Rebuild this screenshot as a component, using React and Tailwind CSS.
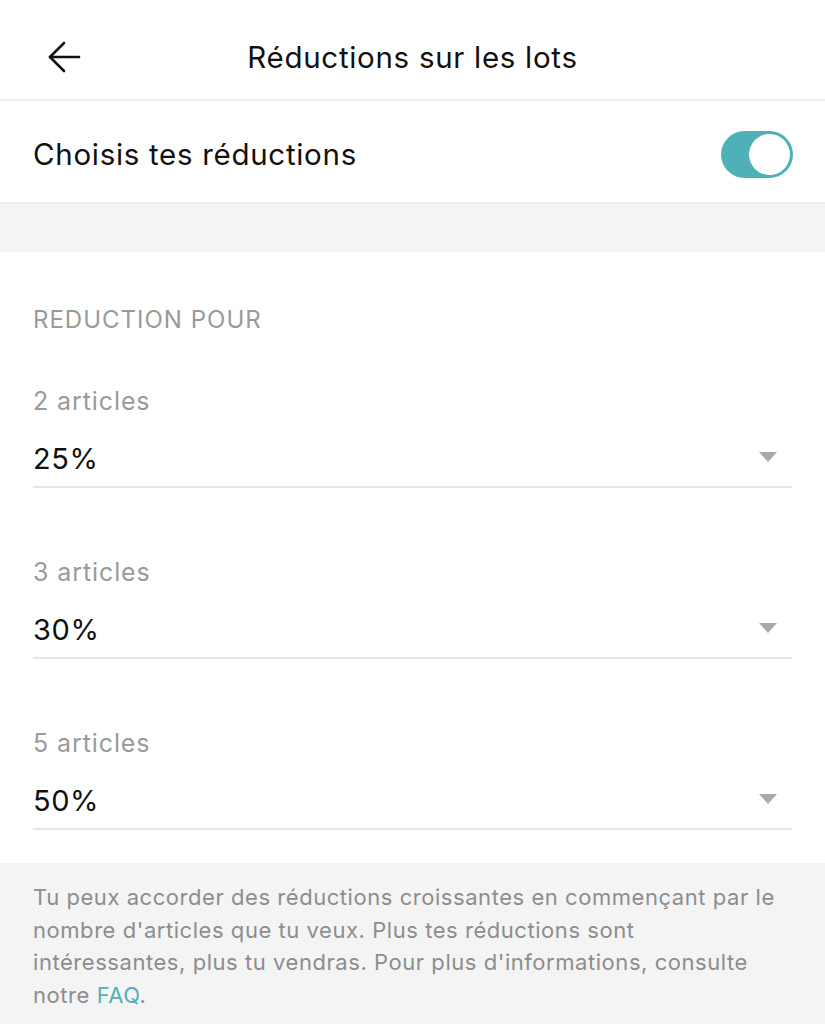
import { useState } from "react";

const lots = [
  { label: "2 articles", value: "25%" },
  { label: "3 articles", value: "30%" },
  { label: "5 articles", value: "50%" },
];

function Caret() {
  return (
    <svg width="18" height="10" viewBox="0 0 18 10" className="shrink-0">
      <path d="M0 0 L18 0 L9 10 Z" fill="#a9a9a9" />
    </svg>
  );
}

export default function App() {
  const [enabled, setEnabled] = useState(true);

  return (
    <div className="w-[825px] h-[1024px] bg-white overflow-hidden flex flex-col font-['Inter',sans-serif] text-[#111]">
      {/* Header */}
      <div className="relative h-[101px] shrink-0 flex items-center justify-center border-b-2 border-[#eeeeee]">
        <button className="absolute left-[47px] top-[41px]">
          <svg width="34" height="32" viewBox="0 0 34 32" fill="none" stroke="#111" strokeWidth="2.6" strokeLinecap="round" strokeLinejoin="round">
            <path d="M32 16 H3" />
            <path d="M17 2 L3 16 L17 30" />
          </svg>
        </button>
        <h1 className="text-[29.5px] tracking-[0.7px] pt-[16px]">Réductions sur les lots</h1>
      </div>

      {/* Toggle row */}
      <div className="h-[103px] shrink-0 flex items-center justify-between pl-[33px] pr-[32px] pt-[6px] border-b-2 border-[#eeeeee]">
        <span className="text-[29.5px] tracking-[0.7px]">Choisis tes réductions</span>
        <button
          onClick={() => setEnabled(!enabled)}
          className={`w-[72px] h-[47px] rounded-full flex items-center p-[3px] ${enabled ? "bg-[#4fb1b7] justify-end" : "bg-[#dddddd] justify-start"}`}
        >
          <span className="block w-[41px] h-[41px] rounded-full bg-white"></span>
        </button>
      </div>

      <div className="h-[48px] shrink-0 bg-[#f4f4f4]"></div>

      {/* Lots */}
      <div className="shrink-0 px-[33px] pt-[52px] pb-[33px]">
        <p className="text-[24px] tracking-[1px] text-[#9a9a9a] leading-[32px]">REDUCTION POUR</p>
        <div className="flex flex-col gap-[67px] mt-[48px]">
          {lots.map((lot) => (
            <div key={lot.label}>
              <p className="text-[25px] tracking-[0.9px] text-[#9a9a9a] leading-[34px]">{lot.label}</p>
              <div className="flex items-center justify-between h-[70px] pt-[14px] pr-[15px] border-b-2 border-[#e6e6e6]">
                <span className="text-[29px] tracking-[0.6px]">{lot.value}</span>
                <span className="-mt-[4px]"><Caret /></span>
              </div>
            </div>
          ))}
        </div>
      </div>

      {/* Footer */}
      <div className="flex-1 bg-[#f4f4f4] px-[33px] pt-[18px]">
        <p className="text-[22px] tracking-[0.55px] leading-[32.5px] text-[#8d8d8d]">
          Tu peux accorder des réductions croissantes en commençant par le nombre d'articles que tu veux. Plus tes réductions sont intéressantes, plus tu vendras. Pour plus d'informations, consulte notre <span className="text-[#4fb1b7]">FAQ</span>.
        </p>
      </div>
    </div>
  );
}
